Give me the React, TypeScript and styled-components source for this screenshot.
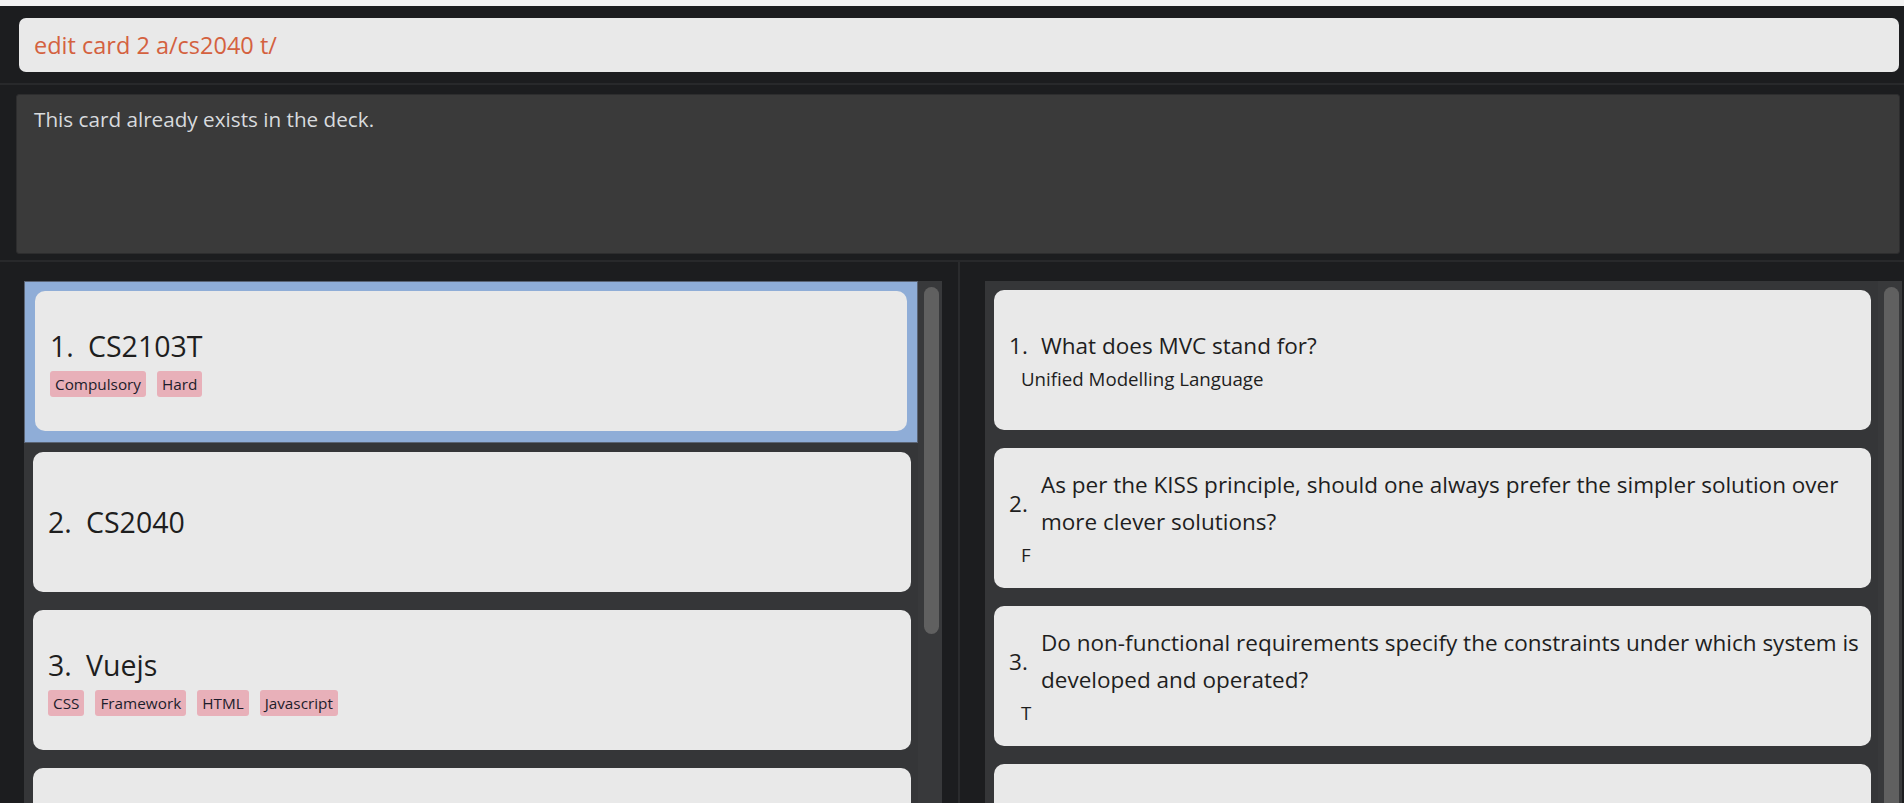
import React from "react";
import styled, { createGlobalStyle } from "styled-components";

const GlobalStyle = createGlobalStyle`
  html, body { margin: 0; padding: 0; background: #1c1d1f; }
  body { font-family: "Open Sans", "Noto Sans", sans-serif; }
  * { box-sizing: border-box; }
`;

const Root = styled.div`
  height: 803px;
  overflow: hidden;
  display: flex;
  flex-direction: column;
  background: #1c1d1f;
`;

const TopStrip = styled.div`
  height: 6px;
  flex: none;
  background: #f2f2f2;
`;

const CommandSection = styled.div`
  flex: none;
  padding: 12px 5px 11px 19px;
`;

const CommandBox = styled.div`
  height: 54px;
  background: #e9e9e9;
  border-radius: 7px;
  display: flex;
  align-items: center;
  padding-left: 15px;
  font-size: 23.5px;
  color: #d4613f;
`;

const HRule = styled.div`
  height: 2px;
  flex: none;
  background: #28292b;
`;

const ResultSection = styled.div`
  flex: none;
  padding: 9px 4px 6px 16px;
`;

const ResultBox = styled.div`
  height: 160px;
  background: #3a3a3a;
  border: 1px solid #2d2d2e;
  border-radius: 3px;
  padding: 11px 17px;
  font-size: 20.7px;
  line-height: 26px;
  color: #d8dbde;
`;

const Split = styled.div`
  flex: 1;
  min-height: 0;
  display: flex;
`;

const Pane = styled.div<{ $side: "left" | "right" }>`
  display: flex;
  min-height: 0;
  ${(p) =>
    p.$side === "left"
      ? "width: 958px; flex: none; padding: 19px 16px 0 24px;"
      : "flex: 1; padding: 19px 2px 0 25px;"}
`;

const VRule = styled.div`
  width: 2px;
  flex: none;
  background: #2a2b2d;
`;

const ListView = styled.div`
  flex: 1;
  display: flex;
  background: #353638;
  overflow: hidden;
`;

const Cells = styled.div`
  flex: 1;
  display: flex;
  flex-direction: column;
`;

const ScrollTrack = styled.div`
  width: 24px;
  flex: none;
  background: #38393b;
  padding: 6px 3px 0 6px;
`;

const ScrollThumb = styled.div<{ $h: number }>`
  height: ${(p) => p.$h}px;
  border-radius: 8px;
  background: #606060;
`;

const Cell = styled.div<{ $selected?: boolean }>`
  flex: none;
  padding: ${(p) => (p.$selected ? "9px 10px 11px 10px" : "9px 7px 9px 9px")};
  background: ${(p) => (p.$selected ? "#8fadd7" : "transparent")};
  border: ${(p) => (p.$selected ? "1px solid #5b6474" : "none")};
`;

const Card = styled.div<{ $kind: "deck" | "question" }>`
  height: 140px;
  background: #e9e9e9;
  border-radius: 10px;
  display: flex;
  flex-direction: column;
  justify-content: center;
  padding: ${(p) => (p.$kind === "question" ? "0 4px 4px 15px" : "0 4px 0 15px")};
  color: #1e1e1e;
`;

const DeckTitle = styled.div`
  display: flex;
  font-size: 28.5px;
  line-height: 40px;
`;

const DeckIndex = styled.span`
  min-width: 38px;
`;

const TagRow = styled.div`
  display: flex;
  gap: 11px;
  margin-top: 5px;
`;

const Tag = styled.span`
  height: 26px;
  display: inline-flex;
  align-items: center;
  padding: 0 5px;
  border-radius: 3px;
  background: #e8b0b9;
  color: #1d1d2b;
  font-size: 15.3px;
`;

const QuestionRow = styled.div`
  display: flex;
  align-items: center;
  font-size: 22.5px;
  line-height: 37px;
`;

const QIndex = styled.span`
  flex: none;
  width: 32px;
`;

const QText = styled.span`
  flex: 1;
`;

const Answer = styled.div`
  margin-top: 3px;
  padding-left: 12px;
  font-size: 18.7px;
  line-height: 23px;
`;

const decks = [
  { name: "CS2103T", tags: ["Compulsory", "Hard"] },
  { name: "CS2040", tags: [] as string[] },
  { name: "Vuejs", tags: ["CSS", "Framework", "HTML", "Javascript"] },
  { name: "CS1101S", tags: ["Compulsory"] },
];

const cards = [
  { q: "What does MVC stand for?", a: "Unified Modelling Language" },
  {
    q: "As per the KISS principle, should one always prefer the simpler solution over more clever solutions?",
    a: "F",
  },
  {
    q: "Do non-functional requirements specify the constraints under which system is developed and operated?",
    a: "T",
  },
  { q: "What is a stub?", a: "A dummy component" },
];

export default function App() {
  return (
    <Root>
      <GlobalStyle />
      <TopStrip />
      <CommandSection>
        <CommandBox>edit card 2 a/cs2040 t/</CommandBox>
      </CommandSection>
      <HRule />
      <ResultSection>
        <ResultBox>This card already exists in the deck.</ResultBox>
      </ResultSection>
      <HRule />
      <Split>
        <Pane $side="left">
          <ListView>
            <Cells>
              {decks.map((d, i) => (
                <Cell key={d.name} $selected={i === 0}>
                  <Card $kind="deck">
                    <DeckTitle>
                      <DeckIndex>{i + 1}.</DeckIndex>
                      <span>{d.name}</span>
                    </DeckTitle>
                    {d.tags.length > 0 && (
                      <TagRow>
                        {d.tags.map((t) => (
                          <Tag key={t}>{t}</Tag>
                        ))}
                      </TagRow>
                    )}
                  </Card>
                </Cell>
              ))}
            </Cells>
            <ScrollTrack>
              <ScrollThumb $h={347} />
            </ScrollTrack>
          </ListView>
        </Pane>
        <VRule />
        <Pane $side="right">
          <ListView>
            <Cells>
              {cards.map((c, i) => (
                <Cell key={i}>
                  <Card $kind="question">
                    <QuestionRow>
                      <QIndex>{i + 1}.</QIndex>
                      <QText>{c.q}</QText>
                    </QuestionRow>
                    <Answer>{c.a}</Answer>
                  </Card>
                </Cell>
              ))}
            </Cells>
            <ScrollTrack>
              <ScrollThumb $h={560} />
            </ScrollTrack>
          </ListView>
        </Pane>
      </Split>
    </Root>
  );
}
